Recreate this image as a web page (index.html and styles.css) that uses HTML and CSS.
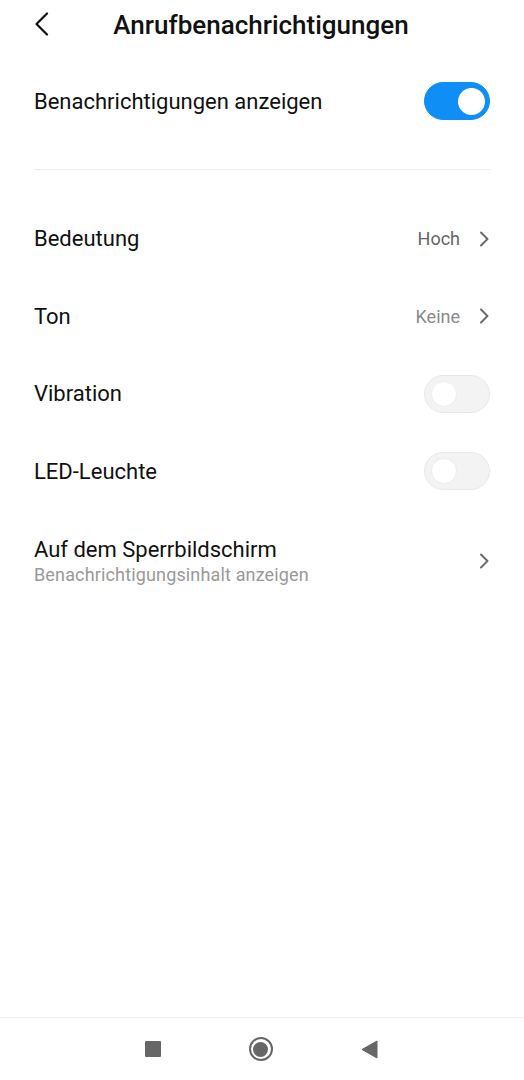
FILE: index.html
```html
<!DOCTYPE html>
<html lang="de">
<head>
    <meta charset="UTF-8">
    <meta name="viewport" content="width=device-width, initial-scale=1.0">
    <title>Anrufbenachrichtigungen</title>
    <link rel="stylesheet" href="styles.css">
</head>
<body>
    <div class="screen">
        <header class="top-bar">
            <button class="back-btn" aria-label="Zurück">
                <svg width="16" height="24" viewBox="0 0 16 24">
                    <path d="M13 1.5 L2.5 12 L13 22.5" fill="none" stroke="#111" stroke-width="2.2" stroke-linecap="round" stroke-linejoin="round"/>
                </svg>
            </button>
            <h1>Anrufbenachrichtigungen</h1>
        </header>

        <div class="row main-row">
            <span class="label">Benachrichtigungen anzeigen</span>
            <span class="switch on"><span class="knob"></span></span>
        </div>

        <div class="divider"></div>

        <div class="list">
            <div class="row">
                <span class="label">Bedeutung</span>
                <span class="value">Hoch</span>
                <svg class="chevron" width="11" height="16" viewBox="0 0 11 16">
                    <path d="M2 1.5 L8.5 8 L2 14.5" fill="none" stroke="#6b6b6b" stroke-width="2" stroke-linecap="round" stroke-linejoin="round"/>
                </svg>
            </div>
            <div class="row">
                <span class="label">Ton</span>
                <span class="value light">Keine</span>
                <svg class="chevron" width="11" height="16" viewBox="0 0 11 16">
                    <path d="M2 1.5 L8.5 8 L2 14.5" fill="none" stroke="#6b6b6b" stroke-width="2" stroke-linecap="round" stroke-linejoin="round"/>
                </svg>
            </div>
            <div class="row">
                <span class="label">Vibration</span>
                <span class="switch"><span class="knob"></span></span>
            </div>
            <div class="row">
                <span class="label">LED-Leuchte</span>
                <span class="switch"><span class="knob"></span></span>
            </div>
            <div class="row tall">
                <div class="text-block">
                    <span class="label">Auf dem Sperrbildschirm</span>
                    <span class="sub">Benachrichtigungsinhalt anzeigen</span>
                </div>
                <svg class="chevron" width="11" height="16" viewBox="0 0 11 16">
                    <path d="M2 1.5 L8.5 8 L2 14.5" fill="none" stroke="#6b6b6b" stroke-width="2" stroke-linecap="round" stroke-linejoin="round"/>
                </svg>
            </div>
        </div>

        <nav class="nav-bar">
            <span class="nav-square"></span>
            <span class="nav-home"><span class="nav-dot"></span></span>
            <svg class="nav-back" width="17" height="19" viewBox="0 0 17 19">
                <path d="M16 1 L16 18 L1 9.5 Z" fill="#666" stroke="#666" stroke-width="1" stroke-linejoin="round"/>
            </svg>
        </nav>
    </div>
</body>
</html>
```

FILE: styles.css
```css
* {
    margin: 0;
    padding: 0;
    box-sizing: border-box;
}

body {
    font-family: Roboto, "Noto Sans", Arial, sans-serif;
    background-color: #fff;
    color: #111;
}

.screen {
    width: 524px;
    height: 1080px;
    display: flex;
    flex-direction: column;
}

.top-bar {
    height: 50px;
    position: relative;
    display: flex;
    align-items: center;
    justify-content: center;
}

.back-btn {
    position: absolute;
    left: 34px;
    top: 12px;
    border: none;
    background: none;
    display: flex;
}

.top-bar h1 {
    font-size: 26px;
    font-weight: 500;
    color: #111;
    padding-right: 2px;
}

.row {
    display: flex;
    align-items: center;
    padding: 0 34px;
    height: 77.5px;
}

.main-row {
    height: 78px;
    margin-top: 12px;
}

.label {
    font-size: 22px;
    color: #111;
    flex: 1;
}

.value {
    font-size: 18px;
    color: #666;
    margin-right: 19px;
}

.value.light {
    color: #8a8a8a;
}

.chevron {
    display: block;
}

.divider {
    height: 1px;
    background-color: #eeeeee;
    margin: 29px 34px 30px;
}

.row.tall {
    height: 102px;
}

.text-block {
    flex: 1;
    display: flex;
    flex-direction: column;
    gap: 2px;
}

.sub {
    font-size: 18px;
    letter-spacing: 0.15px;
    color: #999;
}

.switch {
    width: 66px;
    height: 38px;
    border-radius: 19px;
    background-color: #f3f3f3;
    border: 1px solid #e9e9e9;
    position: relative;
    flex-shrink: 0;
}

.switch .knob {
    position: absolute;
    top: 5px;
    left: 6px;
    width: 26px;
    height: 26px;
    border-radius: 50%;
    background-color: #fff;
    border: 1px solid #ececec;
}

.switch.on {
    background-color: #0f8ff5;
    border-color: #0f8ff5;
}

.switch.on .knob {
    left: auto;
    right: 4px;
    top: 5px;
    width: 27px;
    height: 27px;
    border: none;
}

.nav-bar {
    margin-top: auto;
    height: 63px;
    border-top: 1px solid #eeeeee;
    display: flex;
    align-items: center;
    justify-content: center;
    gap: 88px;
    padding-right: 2px;
}

.nav-square {
    width: 16px;
    height: 16px;
    background-color: #666;
    border-radius: 1px;
}

.nav-home {
    width: 24px;
    height: 24px;
    border-radius: 50%;
    border: 2.5px solid #666;
    display: flex;
    align-items: center;
    justify-content: center;
}

.nav-dot {
    width: 15px;
    height: 15px;
    border-radius: 50%;
    background-color: #666;
}

.nav-back {
    display: block;
}
```
